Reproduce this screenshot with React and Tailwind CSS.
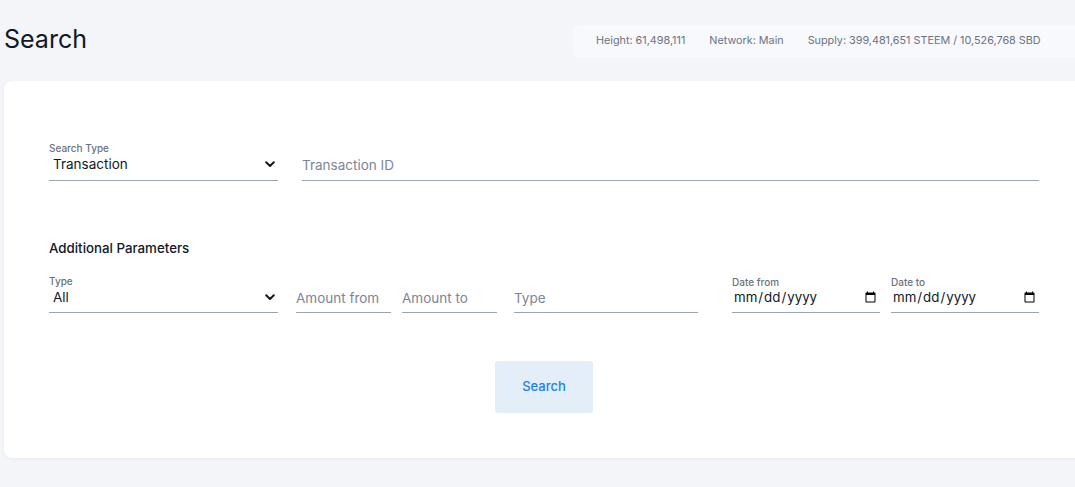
import React from "react";

const Chevron = () => (
  <svg width="10" height="7" viewBox="0 0 10 7" className="shrink-0">
    <path d="M1.2 1.3 L5 5 L8.8 1.3" fill="none" stroke="#111827" strokeWidth="2" strokeLinecap="round" strokeLinejoin="round" />
  </svg>
);

function SelectField({ label, value, className, pb }) {
  return (
    <div className={"flex flex-col border-b border-[#9aa5b4] " + pb + " " + className}>
      <span className="text-[10px] leading-[12px] text-[#6b7280] font-medium">{label}</span>
      <div className="flex items-center justify-between pl-1 pr-[3px] h-[20px]">
        <span className="text-[13.5px] text-[#111827]">{value}</span>
        <Chevron />
      </div>
    </div>
  );
}

function TextField({ placeholder, className, pb }) {
  return (
    <div className={"flex items-end border-b border-[#9aa5b4] " + pb + " " + className}>
      <input
        placeholder={placeholder}
        className="w-full bg-transparent outline-none text-[13.5px] text-[#111827] placeholder:text-[#7c8594] h-[20px]"
      />
    </div>
  );
}

function DateField({ label, className }) {
  return (
    <div className={"flex flex-col border-b border-[#9aa5b4] pb-[4px] " + className}>
      <span className="text-[10px] leading-[12px] text-[#6b7280] font-medium">{label}</span>
      <input
        type="date"
        className="w-full bg-transparent outline-none text-[13.3px] text-[#111827] h-[20px] pl-[1px] pr-[1px]"
      />
    </div>
  );
}

export default function App() {
  return (
    <div
      className="w-screen h-[487px] overflow-hidden bg-[#f4f5f9]"
      style={{ fontFamily: "Inter, 'Noto Sans', sans-serif" }}
    >
      <div className="w-[1090px]">
        <div className="flex items-center justify-between pt-[25px] pl-[4px] h-[58px]">
          <h1 className="text-[25px] leading-[33px] text-[#111827] -mt-[4px]">Search</h1>
          <div className="w-[517px] h-[33px] rounded-l-[6px] bg-[#f8f9fd] flex items-center gap-[24px] pl-[23px] text-[10.8px] text-[#6b7280]">
            <span>Height: 61,498,111</span>
            <span>Network: Main</span>
            <span>Supply: 399,481,651 STEEM / 10,526,768 SBD</span>
          </div>
        </div>
        <div className="mt-[23px] ml-[4px] w-[1080px] h-[377px] bg-white rounded-[8px] shadow-[0_1px_3px_rgba(30,40,80,0.05)] px-[45px] pt-[61px]">
          <div className="flex items-end gap-[24px]">
            <SelectField label="Search Type" value="Transaction" className="w-[229px]" pb="pb-[6px]" />
            <TextField placeholder="Transaction ID" className="w-[737px]" pb="pb-[5px]" />
          </div>
          <div className="mt-[59px] text-[13.3px] font-medium text-[#111827] leading-[16px]">Additional Parameters</div>
          <div className="flex items-end mt-[19px]">
            <SelectField label="Type" value="All" className="w-[229px]" pb="pb-[5px]" />
            <TextField placeholder="Amount from" className="w-[95px] ml-[18px]" pb="pb-[4px]" />
            <TextField placeholder="Amount to" className="w-[95px] ml-[11px]" pb="pb-[4px]" />
            <TextField placeholder="Type" className="w-[184px] ml-[17px]" pb="pb-[4px]" />
            <DateField label="Date from" className="w-[148px] ml-[34px]" />
            <DateField label="Date to" className="w-[148px] ml-[11px]" />
          </div>
          <div className="flex justify-center mt-[48px]">
            <button className="w-[98px] h-[52px] rounded-[3px] bg-[#e4eef8] text-[#1b7ff0] text-[13px] font-medium">
              Search
            </button>
          </div>
        </div>
      </div>
    </div>
  );
}
